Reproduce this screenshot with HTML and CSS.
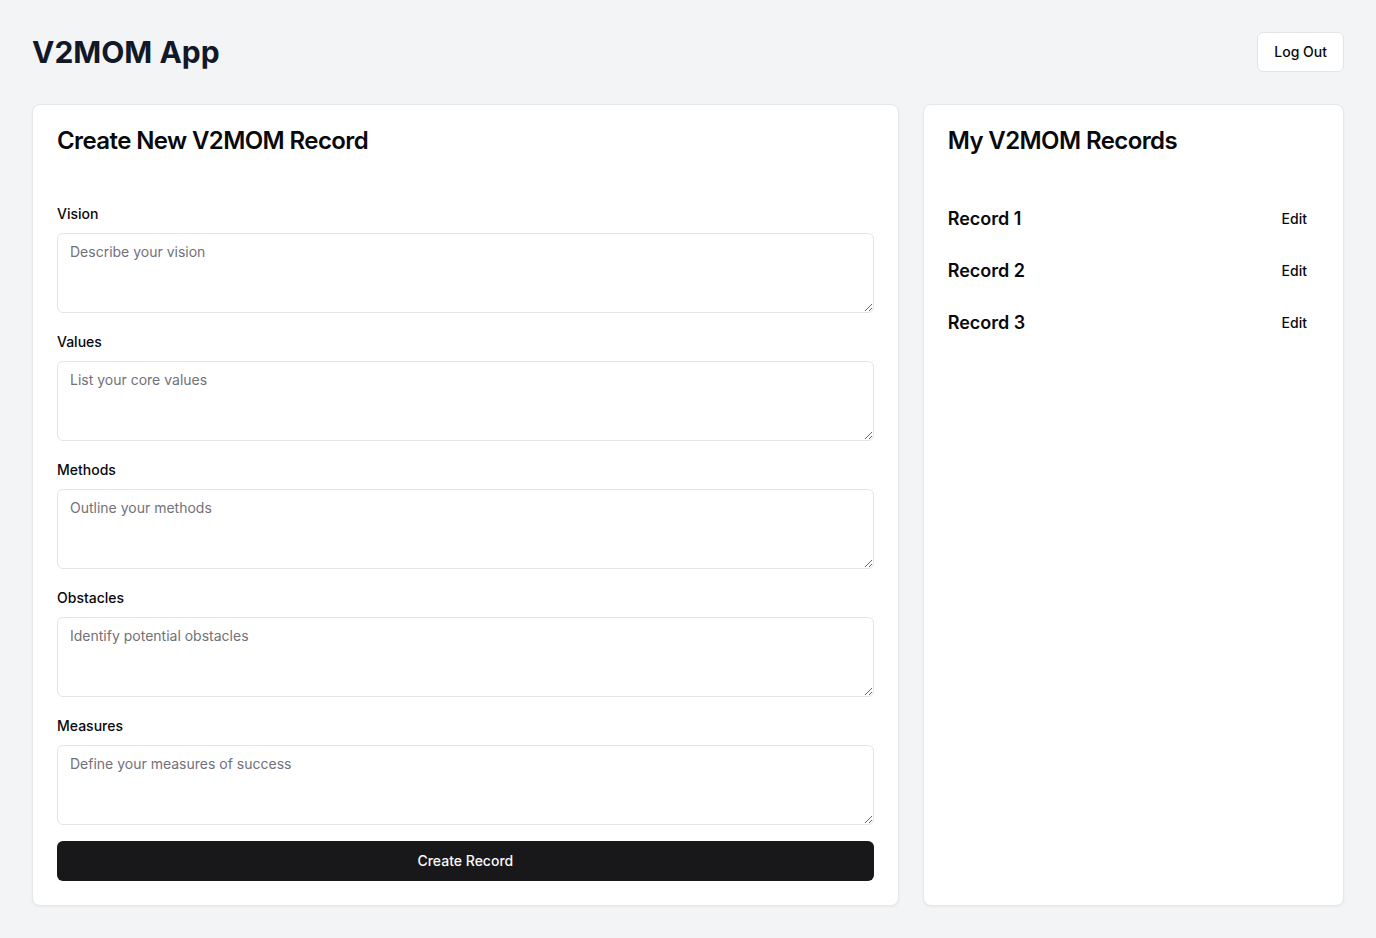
FILE: index.html
```html
<!DOCTYPE html>
<html lang="en">
<head>
<meta charset="utf-8">
<title>V2MOM App</title>
<link rel="stylesheet" href="styles.css">
</head>
<body>
<div class="page">
  <header class="topbar">
    <h1 class="app-title">V2MOM App</h1>
    <button class="btn btn-outline">Log Out</button>
  </header>
  <main class="grid">
    <section class="card card-main">
      <div class="card-header">
        <h2 class="card-title">Create New V2MOM Record</h2>
      </div>
      <form class="card-content form">
        <div class="field">
          <label class="label" for="vision">Vision</label>
          <textarea id="vision" class="textarea" placeholder="Describe your vision"></textarea>
        </div>
        <div class="field">
          <label class="label" for="values">Values</label>
          <textarea id="values" class="textarea" placeholder="List your core values"></textarea>
        </div>
        <div class="field">
          <label class="label" for="methods">Methods</label>
          <textarea id="methods" class="textarea" placeholder="Outline your methods"></textarea>
        </div>
        <div class="field">
          <label class="label" for="obstacles">Obstacles</label>
          <textarea id="obstacles" class="textarea" placeholder="Identify potential obstacles"></textarea>
        </div>
        <div class="field">
          <label class="label" for="measures">Measures</label>
          <textarea id="measures" class="textarea" placeholder="Define your measures of success"></textarea>
        </div>
        <button type="button" class="btn btn-primary">Create Record</button>
      </form>
    </section>
    <section class="card card-side">
      <div class="card-header card-header-side">
        <h2 class="card-title">My V2MOM Records</h2>
      </div>
      <ul class="card-content records">
        <li class="record"><span class="record-name">Record 1</span><button class="btn btn-ghost">Edit</button></li>
        <li class="record"><span class="record-name">Record 2</span><button class="btn btn-ghost">Edit</button></li>
        <li class="record"><span class="record-name">Record 3</span><button class="btn btn-ghost">Edit</button></li>
      </ul>
    </section>
  </main>
</div>
</body>
</html>
```

FILE: styles.css
```css
* { box-sizing: border-box; }

html, body {
  margin: 0;
  padding: 0;
  background: #f3f4f6;
  font-family: Inter, "Noto Sans", "Liberation Sans", sans-serif;
  color: #09090b;
}

.page {
  padding: 32px;
}

.topbar {
  display: flex;
  align-items: center;
  justify-content: space-between;
  margin-bottom: 32px;
}

.app-title {
  margin: 0;
  font-size: 30px;
  line-height: 36px;
  font-weight: 700;
  color: #111827;
}

.btn {
  font-family: inherit;
  font-size: 14px;
  line-height: 20px;
  font-weight: 500;
  border-radius: 6px;
  cursor: pointer;
  color: #09090b;
}

.btn-outline {
  height: 40px;
  padding: 0 16px;
  background: #ffffff;
  border: 1px solid #e4e4e7;
}

.btn-primary {
  display: block;
  height: 40px;
  width: 100%;
  margin-top: 16px;
  background: #18181b;
  color: #fafafa;
  border: none;
}

.btn-ghost {
  height: 36px;
  padding: 0 12px;
  background: transparent;
  border: none;
}

.grid {
  display: grid;
  grid-template-columns: repeat(3, 1fr);
  gap: 24px;
}

.card {
  background: #ffffff;
  border: 1px solid #e5e7eb;
  border-radius: 8px;
  box-shadow: 0 1px 2px 0 rgba(0, 0, 0, 0.05);
}

.card-main {
  grid-column: span 2;
}

.card-header {
  padding: 24px 24px 51px;
}

.card-header-side {
  padding-bottom: 48px;
}

.card-title {
  margin: 0;
  font-size: 24px;
  line-height: 24px;
  font-weight: 600;
  letter-spacing: -0.025em;
}

.card-content {
  padding: 0 24px 24px;
  margin: 0;
}

.field {
  display: flex;
  flex-direction: column;
}

.field + .field {
  margin-top: 19px;
}

.label {
  font-size: 14px;
  line-height: 20px;
  font-weight: 500;
  margin-bottom: 9px;
}

.textarea {
  display: block;
  width: 100%;
  height: 80px;
  min-height: 80px;
  padding: 8px 12px;
  border: 1px solid #e4e4e7;
  border-radius: 6px;
  background: #ffffff;
  font-family: inherit;
  font-size: 14px;
  line-height: 20px;
  color: #09090b;
}

.textarea::placeholder {
  color: #71717a;
}

.records {
  list-style: none;
  display: flex;
  flex-direction: column;
  gap: 16px;
}

.record {
  display: flex;
  align-items: center;
  justify-content: space-between;
  height: 36px;
}

.record-name {
  font-size: 18px;
  line-height: 28px;
  font-weight: 600;
}
```
